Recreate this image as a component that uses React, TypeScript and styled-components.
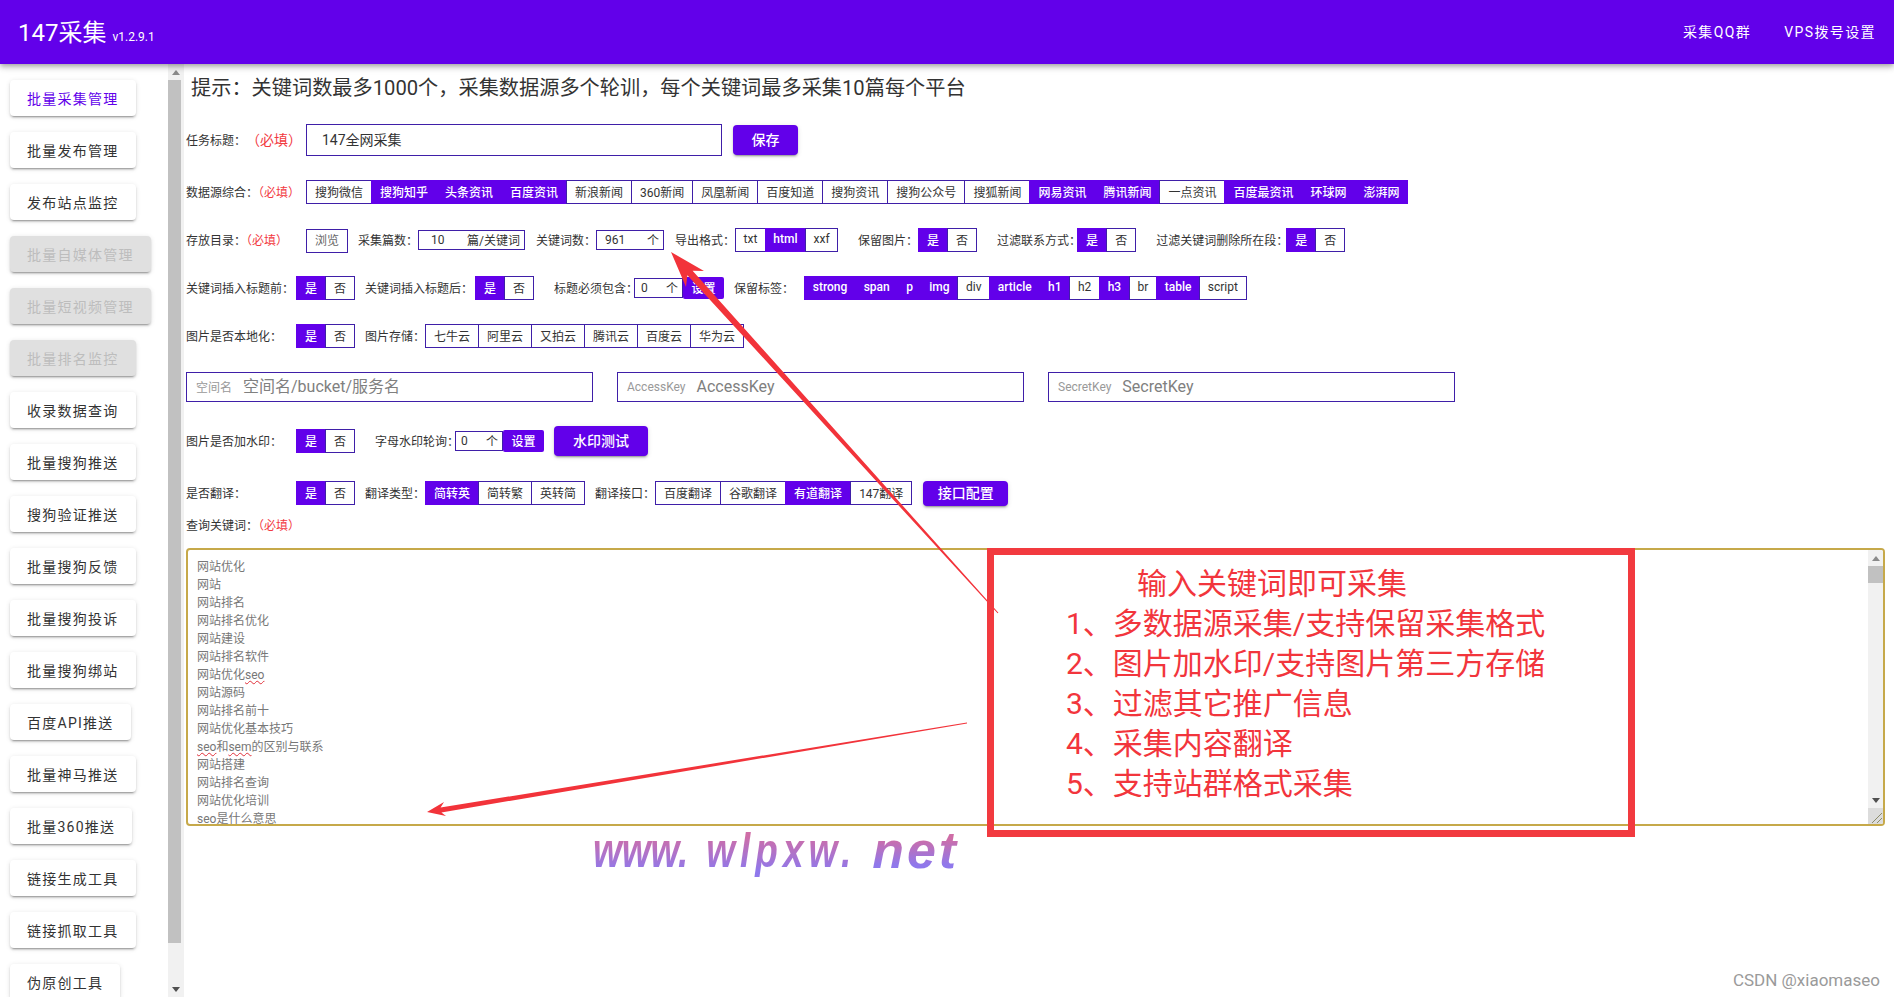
import React from "react";
import styled, { createGlobalStyle } from "styled-components";

const PURPLE = "#6200ea";
const LINE = "#3f1fa8";
const RED = "#f23a3f";

const GlobalStyle = createGlobalStyle`
  html, body {
    margin: 0;
    height: 100%;
    overflow: hidden;
    background: #fff;
    font-family: Roboto, "Noto Sans CJK SC", sans-serif;
    color: #333;
  }
  * { box-sizing: border-box; }
`;

const Shell = styled.div`
  position: relative;
  width: 100%;
  height: 100vh;
  display: flex;
  flex-direction: column;
  overflow: hidden;
`;

const Header = styled.header`
  position: relative;
  z-index: 3;
  flex: 0 0 64px;
  display: flex;
  align-items: center;
  justify-content: space-between;
  padding-left: 18px;
  background: ${PURPLE};
  color: #fff;
  box-shadow: 0 2px 4px -1px rgba(0, 0, 0, 0.2), 0 4px 5px rgba(0, 0, 0, 0.14), 0 1px 10px rgba(0, 0, 0, 0.12);
`;

const Brand = styled.div`
  padding-bottom: 4px;
  font-size: 24px;
  display: flex;
  align-items: baseline;
  gap: 6px;
`;

const Version = styled.span`
  font-size: 12px;
`;

const HeaderNav = styled.nav`
  display: flex;
  align-items: center;
  gap: 1px;
  padding-right: 2px;
`;

const HeaderLink = styled.a`
  padding: 0 16px;
  font-size: 14px;
  letter-spacing: 1.4px;
  line-height: 36px;
`;

const Body = styled.div`
  flex: 1;
  min-height: 0;
  display: flex;
`;

const Sidebar = styled.aside`
  flex: 0 0 184px;
  height: 100%;
  display: flex;
`;

const SideList = styled.div`
  flex: 0 0 168px;
  height: 100%;
  overflow: hidden;
  display: flex;
  flex-direction: column;
  align-items: flex-start;
  gap: 16px;
  padding: 16px 0 0 10px;
`;

const SideButton = styled.button<{ $active?: boolean }>`
  flex: 0 0 36px;
  padding: 0 17px;
  border: 0;
  border-radius: 4px;
  background: #fff;
  color: ${(p) => (p.$active ? PURPLE : "#333")};
  font: 400 14px Roboto, "Noto Sans CJK SC", sans-serif;
  letter-spacing: 1.25px;
  white-space: nowrap;
  box-shadow: 0 3px 1px -2px rgba(0, 0, 0, 0.2), 0 2px 2px 0 rgba(0, 0, 0, 0.14), 0 1px 5px 0 rgba(0, 0, 0, 0.12);

  &:disabled {
    background: #e0e0e0;
    color: #bdbdbd;
  }
`;

const Rail = styled.div<{ $w: number }>`
  flex: 0 0 ${(p) => p.$w}px;
  width: ${(p) => p.$w}px;
  height: 100%;
  display: flex;
  flex-direction: column;
  background: #f1f1f1;
`;

const RailButton = styled.div<{ $down?: boolean }>`
  flex: 0 0 16px;
  display: flex;
  align-items: center;
  justify-content: center;

  &::before {
    content: "";
    border-left: 4px solid transparent;
    border-right: 4px solid transparent;
    ${(p) => (p.$down ? "border-top: 5px solid #505050;" : "border-bottom: 5px solid #8a8a8a;")}
  }
`;

const RailThumb = styled.div<{ $h: number; $inset: number }>`
  flex: 0 0 ${(p) => p.$h}px;
  margin-right: ${(p) => p.$inset}px;
  background: #c1c1c1;
`;

const RailGap = styled.div`
  flex: 1;
`;

const RailCorner = styled.svg`
  flex: 0 0 16px;
  display: block;
  background: #dcdcdc;
`;

const KeywordRail = styled.div`
  position: absolute;
  top: 0;
  right: 0;
  bottom: 0;
`;

const ScrollRail = ({ w, thumb, inset = 0, corner }: { w: number; thumb: number; inset?: number; corner?: boolean }) => (
  <Rail $w={w}>
    <RailButton />
    <RailThumb $h={thumb} $inset={inset} />
    <RailGap />
    <RailButton $down />
    {corner && (
      <RailCorner width={w} height="16" viewBox="0 0 15 16">
        <path d="M4 15 L14 5 M9 15 L14 10" stroke="#8c8c6a" strokeWidth="1" fill="none" />
      </RailCorner>
    )}
  </Rail>
);

const Main = styled.main`
  flex: 1;
  min-width: 0;
  padding: 0 9px 0 2px;
`;

const Tip = styled.div`
  height: 44px;
  margin: 0 0 16px 5px;
  display: flex;
  align-items: center;
  font-size: 20.2px;
  color: #333;
`;

const Row = styled.div<{ $h?: number; $mb?: number }>`
  display: flex;
  align-items: center;
  height: ${(p) => p.$h ?? 24}px;
  margin-bottom: ${(p) => p.$mb ?? 24}px;
`;

const Label = styled.span<{ $w: number; $ml?: number; $wide?: boolean }>`
  flex: 0 0 ${(p) => p.$w}px;
  min-width: 0;
  margin-left: ${(p) => p.$ml ?? 0}px;
  padding-bottom: 2px;
  font-size: 12px;
  white-space: nowrap;
  text-spacing-trim: ${(p) => (p.$wide ? "space-all" : "normal")};
`;

const Required = styled.span<{ $big?: boolean }>`
  font-size: ${(p) => (p.$big ? 14 : 12)}px;
  color: ${RED};
`;

const TitleInput = styled.input`
  width: 416px;
  height: 32px;
  padding: 0 15px 2px;
  border: 1px solid ${LINE};
  outline: 0;
  font: 14px Roboto, "Noto Sans CJK SC", sans-serif;
  color: #333;
`;

const RaisedButton = styled.button<{ $w: number; $h: number; $ml: number }>`
  width: ${(p) => p.$w}px;
  height: ${(p) => p.$h}px;
  margin-left: ${(p) => p.$ml}px;
  padding: 0 0 2px;
  border: 0;
  border-radius: 4px;
  background: ${PURPLE};
  color: #fff;
  font: 500 14px Roboto, "Noto Sans CJK SC", sans-serif;
  box-shadow: 0 3px 1px -2px rgba(0, 0, 0, 0.2), 0 2px 2px 0 rgba(0, 0, 0, 0.14), 0 1px 5px 0 rgba(0, 0, 0, 0.12);
`;

const Segments = styled.div<{ $ml?: number }>`
  display: inline-flex;
  height: 24px;
  margin-left: ${(p) => p.$ml ?? 0}px;
`;

const Segment = styled.span<{ $on?: boolean; $px?: number }>`
  display: flex;
  align-items: center;
  padding: 0 ${(p) => p.$px ?? 8}px 2px;
  border: 1px solid ${(p) => (p.$on ? PURPLE : LINE)};
  border-right-width: 0;
  background: ${(p) => (p.$on ? PURPLE : "#fff")};
  color: ${(p) => (p.$on ? "#fff" : "#333")};
  font-size: 12px;
  font-weight: ${(p) => (p.$on ? 500 : 400)};
  white-space: nowrap;

  &:last-child {
    border-right-width: 1px;
  }
`;

const BrowseButton = styled.span`
  display: flex;
  align-items: center;
  justify-content: center;
  width: 42px;
  height: 24px;
  margin-top: 1px;
  padding-bottom: 2px;
  border: 1px solid ${LINE};
  font-size: 12px;
  color: #666;
`;

const SuffixField = styled.label<{ $w: number; $pl: number }>`
  display: flex;
  align-items: center;
  flex: 0 0 ${(p) => p.$w}px;
  height: 20px;
  padding: 0 4px 1px ${(p) => p.$pl}px;
  border: 1px solid ${LINE};
  font-size: 12px;
  white-space: nowrap;

  input {
    flex: 1;
    width: 0;
    min-width: 0;
    padding: 0;
    border: 0;
    outline: 0;
    font: inherit;
    color: #333;
    background: transparent;
  }
`;

const SetButton = styled.span`
  display: flex;
  align-items: center;
  justify-content: center;
  flex: 0 0 41px;
  height: 22px;
  padding-bottom: 2px;
  border-radius: 2px;
  background: ${PURPLE};
  color: #fff;
  font-size: 12px;
  font-weight: 500;
`;

const StorageGrid = styled.div`
  display: grid;
  grid-template-columns: repeat(3, 407px);
  gap: 24px;
  height: 30px;
  margin-bottom: 24px;
`;

const StorageField = styled.label`
  display: flex;
  align-items: center;
  gap: 11px;
  padding: 0 0 1px 9px;
  border: 1px solid ${LINE};
  font-size: 12px;
  color: #999;
  white-space: nowrap;

  input {
    flex: 1;
    width: 0;
    min-width: 0;
    border: 0;
    outline: 0;
    padding: 0;
    font: 16px Roboto, "Noto Sans CJK SC", sans-serif;
  }
  input::placeholder { color: #808080; }
`;

const KeywordBox = styled.div`
  position: relative;
  width: 1699px;
  height: 278px;
  padding: 8px 0 0 9px;
  border: 2px solid #c6a94a;
  border-radius: 4px;
  overflow: hidden;
  font-size: 12px;
  line-height: 18px;
  color: #777;
`;

const Misspelled = styled.span`
  text-decoration: underline wavy #e0303a 1px;
`;

const Annotation = styled.div`
  position: absolute;
  z-index: 5;
  left: 987px;
  top: 548px;
  width: 648px;
  height: 289px;
  padding: 9px 0 0 72px;
  border: 7px solid #f23a3f;
  color: #f2353c;
  font-size: 30px;
  line-height: 40px;
  pointer-events: none;
`;

const AnnotationTitle = styled.div`
  padding-left: 71px;
`;

const ArrowLayer = styled.svg`
  position: absolute;
  z-index: 4;
  inset: 0;
  pointer-events: none;
`;

const SiteMark = styled.div`
  position: absolute;
  z-index: 5;
  left: 593px;
  top: 820px;
  display: flex;
  align-items: baseline;
  font-family: "Liberation Sans", sans-serif;
  font-style: italic;
  font-weight: bold;
  line-height: 60px;
  white-space: pre;
`;

const MarkWord = styled.span<{ $size: number; $sy: number; $ls: number; $ml: number }>`
  display: inline-block;
  margin-left: ${(p) => p.$ml}px;
  font-size: ${(p) => p.$size}px;
  letter-spacing: ${(p) => p.$ls}px;
  transform: scaleY(${(p) => p.$sy});
  transform-origin: 0 75%;
  background: linear-gradient(180deg, #cf6da6 30%, #8f78ec 75%);
  -webkit-background-clip: text;
  background-clip: text;
  color: transparent;
`;

const Credit = styled.div`
  position: absolute;
  z-index: 5;
  right: 14px;
  bottom: 7px;
  font-size: 17px;
  color: #9a9a9a;
`;

const menu = [
  ["批量采集管理"], ["批量发布管理"], ["发布站点监控"],
  ["批量自媒体管理", "off"], ["批量短视频管理", "off"], ["批量排名监控", "off"],
  ["收录数据查询"], ["批量搜狗推送"], ["搜狗验证推送"], ["批量搜狗反馈"], ["批量搜狗投诉"],
  ["批量搜狗绑站"], ["百度API推送"], ["批量神马推送"], ["批量360推送"],
  ["链接生成工具"], ["链接抓取工具"], ["伪原创工具"],
];

const sources: [string, boolean][] = [
  ["搜狗微信", false], ["搜狗知乎", true], ["头条资讯", true], ["百度资讯", true], ["新浪新闻", false],
  ["360新闻", false], ["凤凰新闻", false], ["百度知道", false], ["搜狗资讯", false], ["搜狗公众号", false],
  ["搜狐新闻", false], ["网易资讯", true], ["腾讯新闻", true], ["一点资讯", false], ["百度最资讯", true],
  ["环球网", true], ["澎湃网", true],
];

const tags: [string, boolean][] = [
  ["strong", true], ["span", true], ["p", true], ["img", true], ["div", false], ["article", true],
  ["h1", true], ["h2", false], ["h3", true], ["br", false], ["table", true], ["script", false],
];

const keywords: React.ReactNode[] = [
  "网站优化", "网站", "网站排名", "网站排名优化", "网站建设", "网站排名软件",
  <>网站优化<Misspelled>seo</Misspelled></>,
  "网站源码", "网站排名前十", "网站优化基本技巧",
  <><Misspelled>seo</Misspelled>和<Misspelled>sem</Misspelled>的区别与联系</>,
  "网站搭建", "网站排名查询", "网站优化培训",
  <><Misspelled>seo</Misspelled>是什么意思</>,
];

const YesNo = ({ ml }: { ml?: number }) => (
  <Segments $ml={ml}>
    <Segment $on>是</Segment>
    <Segment>否</Segment>
  </Segments>
);

const Options = ({ items, ml, px }: { items: [string, boolean][]; ml?: number; px?: number }) => (
  <Segments $ml={ml}>
    {items.map(([text, on]) => (
      <Segment key={text} $on={on} $px={px}>{text}</Segment>
    ))}
  </Segments>
);

const App: React.FC = () => {
  return (
    <Shell>
      <GlobalStyle />
      <Header>
        <Brand>147采集<Version>v1.2.9.1</Version></Brand>
        <HeaderNav>
          <HeaderLink>采集QQ群</HeaderLink>
          <HeaderLink>VPS拨号设置</HeaderLink>
        </HeaderNav>
      </Header>
      <Body>
        <Sidebar>
          <SideList>
            {menu.map(([text, state], i) => (
              <SideButton key={text} $active={i === 0} disabled={state === "off"}>{text}</SideButton>
            ))}
          </SideList>
          <ScrollRail w={16} thumb={863} inset={3} />
        </Sidebar>
        <Main>
          <Tip>提示：关键词数最多1000个，采集数据源多个轮训，每个关键词最多采集10篇每个平台</Tip>

          <Row $h={32}>
            <Label $w={120} $wide>任务标题：<Required $big>（必填）</Required></Label>
            <TitleInput defaultValue="147全网采集" />
            <RaisedButton $w={65} $h={30} $ml={11}>保存</RaisedButton>
          </Row>

          <Row>
            <Label $w={120}>数据源综合：<Required>（必填）</Required></Label>
            <Options items={sources} />
          </Row>

          <Row>
            <Label $w={120}>存放目录：<Required>（必填）</Required></Label>
            <BrowseButton>浏览</BrowseButton>
            <Label $w={60} $ml={10}>采集篇数：</Label>
            <SuffixField $w={107} $pl={12}><input defaultValue="10" />篇/关键词</SuffixField>
            <Label $w={60} $ml={11}>关键词数：</Label>
            <SuffixField $w={68} $pl={8}><input defaultValue="961" />个</SuffixField>
            <Label $w={60} $ml={11}>导出格式：</Label>
            <Options items={[["txt", false], ["html", true], ["xxf", false]]} px={7.5} />
            <Label $w={60} $ml={20}>保留图片：</Label>
            <YesNo />
            <Label $w={80} $ml={20}>过滤联系方式：</Label>
            <YesNo />
            <Label $w={130} $ml={20}>过滤关键词删除所在段：</Label>
            <YesNo />
          </Row>

          <Row>
            <Label $w={110}>关键词插入标题前：</Label>
            <YesNo />
            <Label $w={110} $ml={10}>关键词插入标题后：</Label>
            <YesNo />
            <Label $w={80} $ml={20}>标题必须包含：</Label>
            <SuffixField $w={49} $pl={6}><input defaultValue="0" />个</SuffixField>
            <SetButton>设置</SetButton>
            <Label $w={70} $ml={10}>保留标签：</Label>
            <Options items={tags} px={7.7} />
          </Row>

          <Row>
            <Label $w={110}>图片是否本地化：</Label>
            <YesNo />
            <Label $w={60} $ml={10}>图片存储：</Label>
            <Options items={[["七牛云", false], ["阿里云", false], ["又拍云", false], ["腾讯云", false], ["百度云", false], ["华为云", false]]} />
          </Row>

          <StorageGrid>
            <StorageField>空间名<input placeholder="空间名/bucket/服务名" /></StorageField>
            <StorageField>AccessKey<input placeholder="AccessKey" /></StorageField>
            <StorageField>SecretKey<input placeholder="SecretKey" /></StorageField>
          </StorageGrid>

          <Row $h={30} $mb={25}>
            <Label $w={110}>图片是否加水印：</Label>
            <YesNo />
            <Label $w={80} $ml={20}>字母水印轮询：</Label>
            <SuffixField $w={48} $pl={5}><input defaultValue="0" />个</SuffixField>
            <SetButton>设置</SetButton>
            <RaisedButton $w={94} $h={30} $ml={10}>水印测试</RaisedButton>
          </Row>

          <Row $mb={11}>
            <Label $w={110}>是否翻译：</Label>
            <YesNo />
            <Label $w={60} $ml={10}>翻译类型：</Label>
            <Options items={[["简转英", true], ["简转繁", false], ["英转简", false]]} />
            <Label $w={60} $ml={10}>翻译接口：</Label>
            <Options items={[["百度翻译", false], ["谷歌翻译", false], ["有道翻译", true], ["147翻译", false]]} />
            <RaisedButton $w={85} $h={25} $ml={11}>接口配置</RaisedButton>
          </Row>

          <Row $h={18} $mb={14}>
            <Label $w={120}>查询关键词：<Required>（必填）</Required></Label>
          </Row>

          <KeywordBox>
            {keywords.map((line, i) => (
              <div key={i}>{line}</div>
            ))}
            <KeywordRail>
              <ScrollRail w={15} thumb={17} corner />
            </KeywordRail>
          </KeywordBox>
        </Main>
      </Body>

      <ArrowLayer width="1894" height="997" viewBox="0 0 1894 997">
        <polygon fill="#f2333a" points="671,252 704,271 692.6,270.7 998.4,612.7 997.6,613.3 687.4,275.3 686,287" />
        <polygon fill="#f2333a" points="427,812 446,816 441.4,812.5 967,723.4 967,722.6 440.6,807.5 444,802" />
      </ArrowLayer>

      <Annotation>
        <AnnotationTitle>输入关键词即可采集</AnnotationTitle>
        <div>1、多数据源采集/支持保留采集格式</div>
        <div>2、图片加水印/支持图片第三方存储</div>
        <div>3、过滤其它推广信息</div>
        <div>4、采集内容翻译</div>
        <div>5、支持站群格式采集</div>
      </Annotation>

      <SiteMark>
        <MarkWord $size={37} $sy={1.3} $ls={0} $ml={0}>www.</MarkWord>
        <MarkWord $size={37} $sy={1.3} $ls={5} $ml={18}>wlpxw.</MarkWord>
        <MarkWord $size={52} $sy={1} $ls={3} $ml={16}>net</MarkWord>
      </SiteMark>
      <Credit>CSDN @xiaomaseo</Credit>
    </Shell>
  );
};

export default App;
